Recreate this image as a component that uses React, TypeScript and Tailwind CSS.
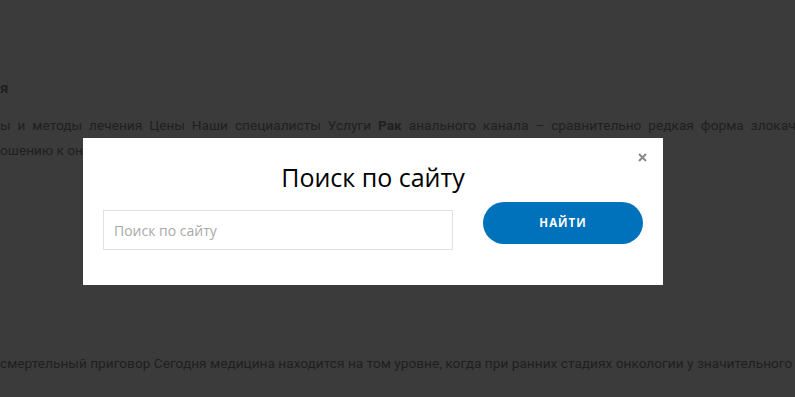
import React from "react"

const BG_FONT = { fontFamily: "Roboto, 'Noto Sans', sans-serif" }

export default function App() {
  return (
    <div className="relative w-[795px] h-[397px] overflow-hidden bg-[#3b3b3b]">
      {/* page behind the overlay */}
      <div className="pt-[76px] text-[13.7px] text-[#1f1f1f]" style={BG_FONT}>
        <p className="h-[24px] leading-[24px] font-bold text-[15px]">я</p>
        <p className="mt-[13px] h-[25px] leading-[25px] whitespace-nowrap [word-spacing:3.5px]">
          ы и методы лечения Цены Наши специалисты Услуги <b>Рак</b> анального канала – сравнительно редкая форма злокач
        </p>
        <p className="h-[25px] leading-[25px] whitespace-nowrap">ошению к онкологии</p>
        <p className="mt-[188px] h-[25px] leading-[25px] whitespace-nowrap">
          смертельный приговор Сегодня медицина находится на том уровне, когда при ранних стадиях онкологии у значительного
        </p>
      </div>

      {/* search modal */}
      <div
        className="absolute left-[83px] top-[138px] w-[580px] h-[147px] bg-white px-[20px]"
        style={{ fontFamily: "'Open Sans', 'Noto Sans', sans-serif" }}
      >
        <button className="absolute right-[16px] top-[15px] p-[0px] text-[#8a8a8a]" aria-label="Закрыть">
          <svg width="9" height="9" viewBox="0 0 9 9">
            <path d="M1 1L8 8M8 1L1 8" stroke="currentColor" strokeWidth="2" />
          </svg>
        </button>
        <h2 className="pt-[22px] text-center text-[25px] leading-[34px] text-black">Поиск по сайту</h2>
        <div className="mt-[8px] flex items-start justify-between">
          <input
            autoFocus
            placeholder="Поиск по сайту"
            className="mt-[8px] w-[350px] h-[40px] border border-[#e1e1e1] px-[10px] text-[14px] text-[#333] placeholder:text-[#a9a9a9] outline-none"
          />
          <button className="w-[160px] h-[42px] rounded-full bg-[#0071bb] text-white text-[11.5px] font-bold tracking-[1px]">
            НАЙТИ
          </button>
        </div>
      </div>
    </div>
  )
}
